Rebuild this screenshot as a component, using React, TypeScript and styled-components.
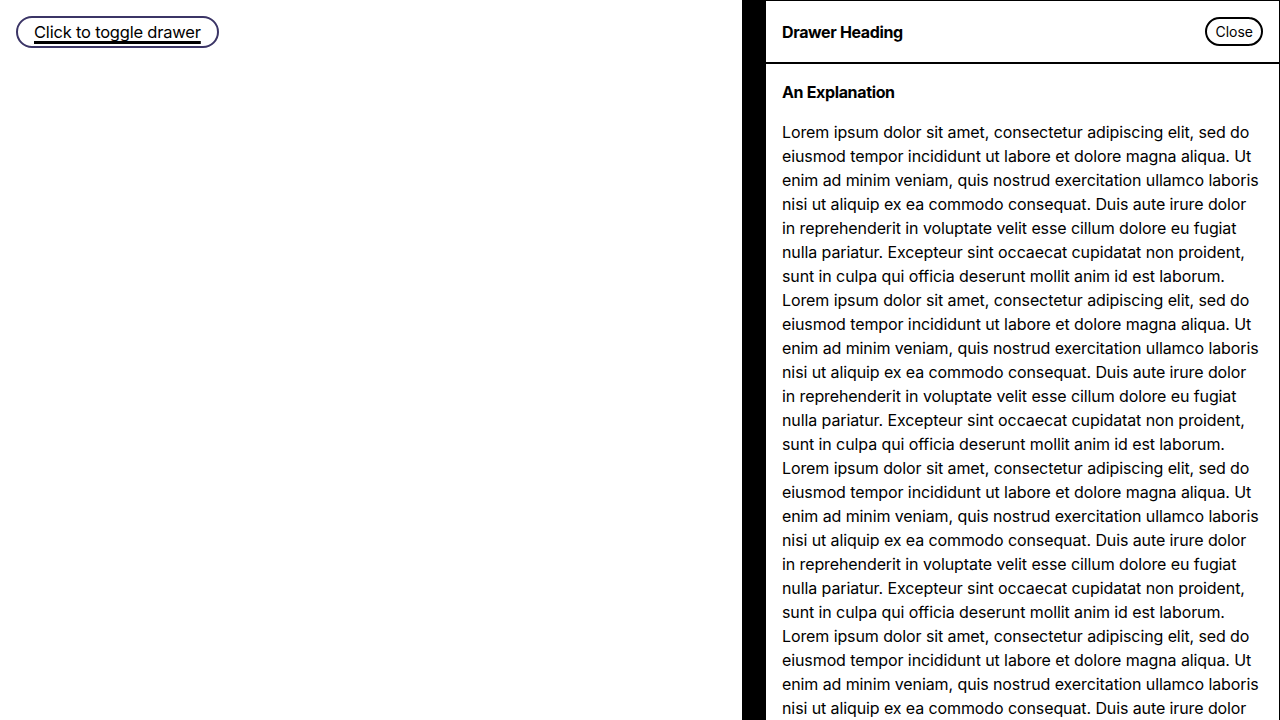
import React from "react";
import styled, { createGlobalStyle } from "styled-components";

const Global = createGlobalStyle`
  html, body { margin: 0; padding: 0; background: #fff; }
  body { font-family: Inter, "Liberation Sans", sans-serif; color: #000; overflow: hidden; }
  * { box-sizing: border-box; }
`;

const Page = styled.main`
  padding: 16px;
  height: 720px;
`;

const ToggleButton = styled.button`
  font-family: inherit;
  font-size: 16.5px;
  letter-spacing: -0.2px;
  line-height: 24px;
  height: 32px;
  padding: 2px 16px 3px;
  background: #fff;
  color: #000;
  border: 2px solid #3b3566;
  border-radius: 999px;
  text-decoration: underline;
  text-decoration-thickness: 3px;
  text-underline-offset: 3px;
  text-decoration-skip-ink: none;
  cursor: pointer;
`;

const Drawer = styled.aside`
  position: fixed;
  top: 0;
  right: 0;
  bottom: 0;
  width: 538px;
  background: #fff;
  border-left: 24px solid #000;
  border-top: 1px solid #000;
  border-right: 1px solid #000;
  display: flex;
  flex-direction: column;
  overflow: hidden;
`;

const Header = styled.header`
  height: 63px;
  flex: none;
  display: flex;
  align-items: center;
  justify-content: space-between;
  padding: 0 16px;
  border-bottom: 2px solid #000;
`;

const Heading = styled.h2`
  margin: 0;
  font-size: 16px;
  font-weight: 700;
  letter-spacing: -0.35px;
`;

const CloseButton = styled.button`
  font-family: inherit;
  font-size: 14px;
  line-height: 21px;
  padding: 2px 8px;
  background: #fff;
  color: #000;
  border: 2px solid #000;
  border-radius: 999px;
  cursor: pointer;
`;

const Body = styled.div`
  padding: 16px;
  font-size: 16px;
  line-height: 24px;
  letter-spacing: -0.1px;
`;

const SubHeading = styled.h3`
  margin: 0 0 16px;
  font-size: 16px;
  line-height: 24px;
  font-weight: 700;
  letter-spacing: -0.35px;
`;

const Text = styled.p`
  margin: 0;
`;

const lorem =
  "Lorem ipsum dolor sit amet, consectetur adipiscing elit, sed do eiusmod tempor incididunt ut labore et dolore magna aliqua. Ut enim ad minim veniam, quis nostrud exercitation ullamco laboris nisi ut aliquip ex ea commodo consequat. Duis aute irure dolor in reprehenderit in voluptate velit esse cillum dolore eu fugiat nulla pariatur. Excepteur sint occaecat cupidatat non proident, sunt in culpa qui officia deserunt mollit anim id est laborum.";

export default function App() {
  return (
    <>
      <Global />
      <Page>
        <ToggleButton>Click to toggle drawer</ToggleButton>
      </Page>
      <Drawer>
        <Header>
          <Heading>Drawer Heading</Heading>
          <CloseButton>Close</CloseButton>
        </Header>
        <Body>
          <SubHeading>An Explanation</SubHeading>
          <Text>{Array(6).fill(lorem).join(" ")}</Text>
        </Body>
      </Drawer>
    </>
  );
}
